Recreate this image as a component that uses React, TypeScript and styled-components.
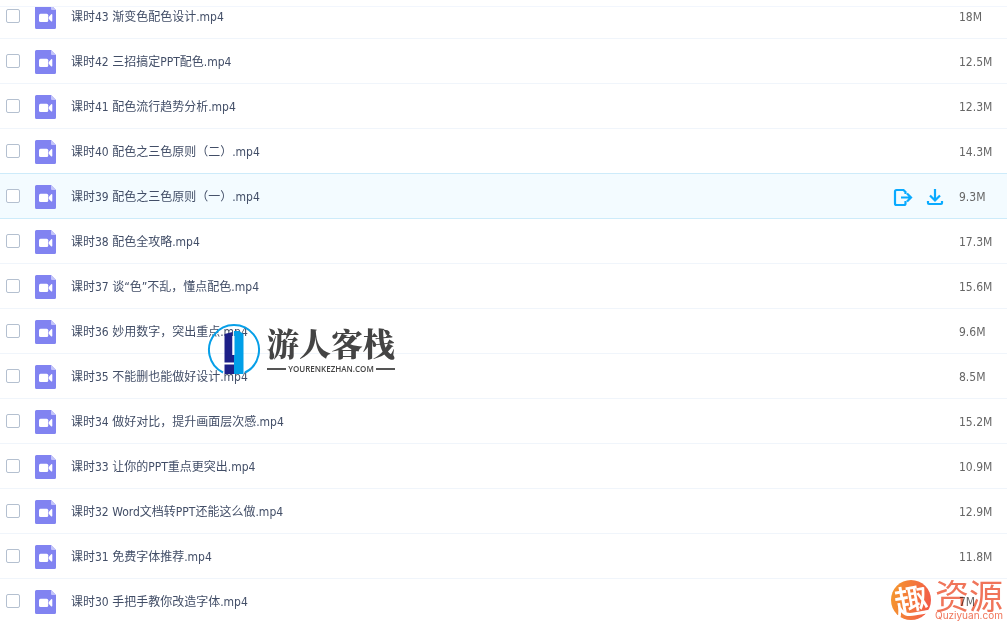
import React from "react";
import styled, { createGlobalStyle } from "styled-components";

const GlobalStyle = createGlobalStyle`
  *, *::before, *::after { box-sizing: border-box; }
  body {
    margin: 0;
    background: #fff;
    font-family: "DejaVu Sans Condensed", "Noto Sans CJK SC", sans-serif;
    font-size: 12px;
    line-height: 20px;
    color: #424e67;
  }
`;

const Page = styled.main`
  position: relative;
  display: flex;
  flex-direction: column;
  height: 100vh;
  overflow: hidden;
`;

const HeaderEdge = styled.div`
  flex: none;
  height: 7px;
  border-bottom: 1px solid #f2f6fd;
`;

const Scroller = styled.div`
  flex: 1;
  min-height: 0;
  overflow: hidden;
`;

const FileTable = styled.table`
  width: 100%;
  margin-top: -13px;
  table-layout: fixed;
  border-collapse: separate;
  border-spacing: 0;
`;

const Row = styled.tr<{ $active: boolean; $beforeActive: boolean }>`
  height: 45px;
  background: ${(p) => (p.$active ? "#f3fbff" : "#fff")};

  > td {
    border-bottom: 1px solid ${(p) => (p.$active || p.$beforeActive ? "#cdebfa" : "#f0f5fb")};
  }
`;

const Cell = styled.td`
  padding: 0;
  vertical-align: middle;
`;

const CheckCell = styled(Cell)`
  padding-left: 6px;
`;

const TextCell = styled(Cell)`
  padding-top: 2px;
`;

const SizeCell = styled(TextCell)`
  color: #666;
`;

const Check = styled.input`
  display: block;
  appearance: none;
  width: 14px;
  height: 14px;
  margin: 0;
  border: 1px solid #b4c0d0;
  border-radius: 2px;
  background: #fff;
`;

const FileIcon = styled.svg`
  display: block;
  width: 21px;
  height: 24px;
  margin-top: 1px;
`;

const FileName = styled.label`
  display: block;
  overflow: hidden;
  white-space: nowrap;
  text-overflow: ellipsis;
`;

const Actions = styled.div`
  display: flex;
  gap: 12px;
  padding-top: 4px;
`;

const IconButton = styled.button`
  display: block;
  width: 20px;
  height: 20px;
  margin: 0;
  padding: 0;
  border: 0;
  background: none;
  color: #09aaff;

  svg {
    display: block;
  }
`;

const InnMark = styled.div`
  position: absolute;
  left: 207px;
  top: 323px;
  display: flex;
  align-items: center;
  gap: 6px;
  pointer-events: none;
`;

const InnWords = styled.div`
  color: #444;
`;

const InnName = styled.div`
  font: 900 32px/34px "Noto Serif CJK SC", "Noto Sans CJK SC", serif;
`;

const InnDomain = styled.div`
  display: flex;
  align-items: center;
  gap: 2px;
  margin-top: 4px;
  font: 600 8px/12px "Open Sans", sans-serif;

  &::before,
  &::after {
    content: "";
    flex: 1;
    height: 2px;
    background: #555;
  }
`;

const ResourceMark = styled.div`
  position: absolute;
  right: 4px;
  bottom: 3px;
  display: flex;
  align-items: center;
  gap: 4px;
  color: #f0755a;
  mix-blend-mode: multiply;
  pointer-events: none;
`;

const Seal = styled.div`
  display: flex;
  align-items: center;
  justify-content: center;
  width: 40px;
  height: 40px;
  border-radius: 50%;
  background: linear-gradient(100deg, #f59a2c, #f2564b);
  color: #fff;
  font: 500 34px/40px "Noto Sans CJK SC", sans-serif;

  span {
    transform: rotate(-10deg);
  }
`;

const ResourceName = styled.div`
  font: 400 34px/30px "Noto Sans CJK SC", sans-serif;
`;

const ResourceDomain = styled.div`
  font: 10px/10px Inter, sans-serif;
`;

const files = [
  { name: "课时43 渐变色配色设计.mp4", size: "18M" },
  { name: "课时42 三招搞定PPT配色.mp4", size: "12.5M" },
  { name: "课时41 配色流行趋势分析.mp4", size: "12.3M" },
  { name: "课时40 配色之三色原则（二）.mp4", size: "14.3M" },
  { name: "课时39 配色之三色原则（一）.mp4", size: "9.3M" },
  { name: "课时38 配色全攻略.mp4", size: "17.3M" },
  { name: "课时37 谈“色”不乱，懂点配色.mp4", size: "15.6M" },
  { name: "课时36 妙用数字，突出重点.mp4", size: "9.6M" },
  { name: "课时35 不能删也能做好设计.mp4", size: "8.5M" },
  { name: "课时34 做好对比，提升画面层次感.mp4", size: "15.2M" },
  { name: "课时33 让你的PPT重点更突出.mp4", size: "10.9M" },
  { name: "课时32 Word文档转PPT还能这么做.mp4", size: "12.9M" },
  { name: "课时31 免费字体推荐.mp4", size: "11.8M" },
  { name: "课时30 手把手教你改造字体.mp4", size: "7M" },
];

const ACTIVE_INDEX = 4;

function VideoFileIcon() {
  return (
    <FileIcon viewBox="0 0 21 24" aria-hidden="true">
      <path d="M1.500 0H16L21 5V22.500A1.500 1.500 0 0 1 19.500 24H1.500A1.500 1.500 0 0 1 0 22.500V1.500A1.500 1.500 0 0 1 1.500 0z" fill="#8183f1" />
      <path d="M16 0L21 5H17A1 1 0 0 1 16 4z" fill="#c3c4fa" />
      <rect x="4" y="8.700" width="9.200" height="8.300" rx="1.500" fill="#fff" />
      <path d="M13.700 12L16.200 9.300Q17.300 8.700 17.300 10V15.800Q17.300 17 16.200 16.400L13.700 13.800z" fill="#fff" />
    </FileIcon>
  );
}

function RowActions() {
  return (
    <Actions>
      <IconButton type="button" aria-label="分享">
        <svg width="20" height="20" viewBox="0 0 20 20" fill="none" stroke="currentColor" strokeWidth="2.200">
          <path d="M12.500 6V4L10.500 2H3.500Q2 2 2 3.500V15.500Q2 17 3.500 17H11Q12.500 17 12.500 15.500V13" />
          <path d="M8 9.500H17.500M14 5.500L18 9.500L14 13.500" />
        </svg>
      </IconButton>
      <IconButton type="button" aria-label="下载">
        <svg width="20" height="20" viewBox="0 0 20 20" fill="none" stroke="currentColor" strokeWidth="2.200">
          <path d="M10 1V12M5 7.500L10 12.500L15 7.500" />
          <path d="M3 13V15Q3 16 4 16H16Q17 16 17 15V13" />
        </svg>
      </IconButton>
    </Actions>
  );
}

function InnLogo() {
  return (
    <svg width="54" height="54" viewBox="0 0 54 54" aria-hidden="true">
      <path d="M16 49.500A25 25 0 1 1 38 49.500" fill="none" stroke="#069fe8" strokeWidth="2" />
      <path d="M17.500 11L25.500 9V32H27V39.500H17.500z" fill="#1d2088" />
      <path d="M17.500 41.500H27V51H17.500z" fill="#1d2088" />
      <path d="M27 8L32 8L36.500 11V51H27z" fill="#009fe8" />
      <path d="M25.500 13H27.500V32H25.500z" fill="#fff" />
    </svg>
  );
}

export default function App() {
  return (
    <>
      <GlobalStyle />
      <Page>
        <HeaderEdge />
        <Scroller>
          <FileTable>
            <colgroup>
              <col style={{ width: 35 }} />
              <col style={{ width: 36 }} />
              <col />
              <col style={{ width: 66 }} />
              <col style={{ width: 48 }} />
            </colgroup>
            <tbody>
              {files.map((file, i) => (
                <Row key={file.name} $active={i === ACTIVE_INDEX} $beforeActive={i === ACTIVE_INDEX - 1}>
                  <CheckCell>
                    <Check type="checkbox" id={`file-${i}`} />
                  </CheckCell>
                  <Cell>
                    <VideoFileIcon />
                  </Cell>
                  <TextCell>
                    <FileName htmlFor={`file-${i}`}>{file.name}</FileName>
                  </TextCell>
                  <Cell>{i === ACTIVE_INDEX && <RowActions />}</Cell>
                  <SizeCell>{file.size}</SizeCell>
                </Row>
              ))}
            </tbody>
          </FileTable>
        </Scroller>
        <InnMark>
          <InnLogo />
          <InnWords>
            <InnName>游人客栈</InnName>
            <InnDomain>YOURENKEZHAN.COM</InnDomain>
          </InnWords>
        </InnMark>
        <ResourceMark>
          <Seal>
            <span>趣</span>
          </Seal>
          <div>
            <ResourceName>资源</ResourceName>
            <ResourceDomain>Quziyuan.com</ResourceDomain>
          </div>
        </ResourceMark>
      </Page>
    </>
  );
}
